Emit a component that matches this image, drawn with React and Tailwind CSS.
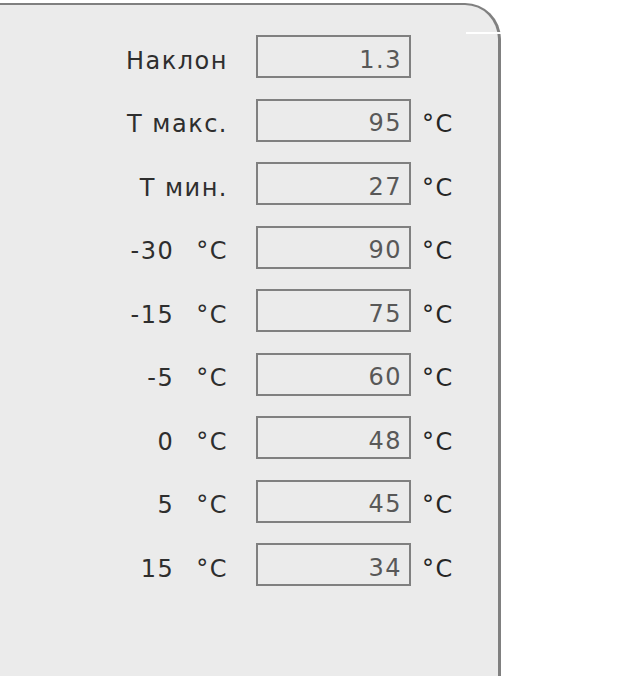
import React from 'react'

const rows = [
  { label: 'Наклон', value: '1.3' },
  { label: 'Т макс.', value: '95', unit: true },
  { label: 'Т мин.', value: '27', unit: true },
  { temp: '-30', value: '90', unit: true },
  { temp: '-15', value: '75', unit: true },
  { temp: '-5', value: '60', unit: true },
  { temp: '0', value: '48', unit: true },
  { temp: '5', value: '45', unit: true },
  { temp: '15', value: '34', unit: true },
]

export default function App() {
  return (
    <main className="h-[676px] bg-white overflow-hidden pt-[3px]" style={{ fontFamily: '"DejaVu Sans", Verdana, sans-serif' }}>
      {/* Panel */}
      <div className="relative w-[501px] h-[680px] bg-[#ebebeb] border-t-2 border-r-[3px] border-[#808080] rounded-tr-[36px]">
        <div className="absolute top-[27px] right-[-3px] w-[35px] h-[2px] bg-white" />

        <div className="flex flex-col gap-[20.5px] pt-[30px]">
          {rows.map((r, i) => (
            <div key={i} className="flex items-center h-[43px] text-[24px] tracking-[1.5px]">
              {/* Label */}
              <div className="w-[228px] flex justify-end pt-[8px] text-[#2e2e2e]">
                {r.temp ? (
                  <div className="flex items-center">
                    <span className="text-right">{r.temp}</span>
                    <span className="ml-[22px]">°C</span>
                  </div>
                ) : (
                  <span>{r.label}</span>
                )}
              </div>

              {/* Input */}
              <div className="ml-[28px] w-[155px] h-[43px] border-2 border-[#808080] flex items-center justify-end pt-[6px] pr-[7px] text-[#585858]">
                {r.value}
              </div>

              {r.unit && <span className="ml-[11px] pt-[8px] text-[#262626]">°C</span>}
            </div>
          ))}
        </div>
      </div>
    </main>
  )
}
